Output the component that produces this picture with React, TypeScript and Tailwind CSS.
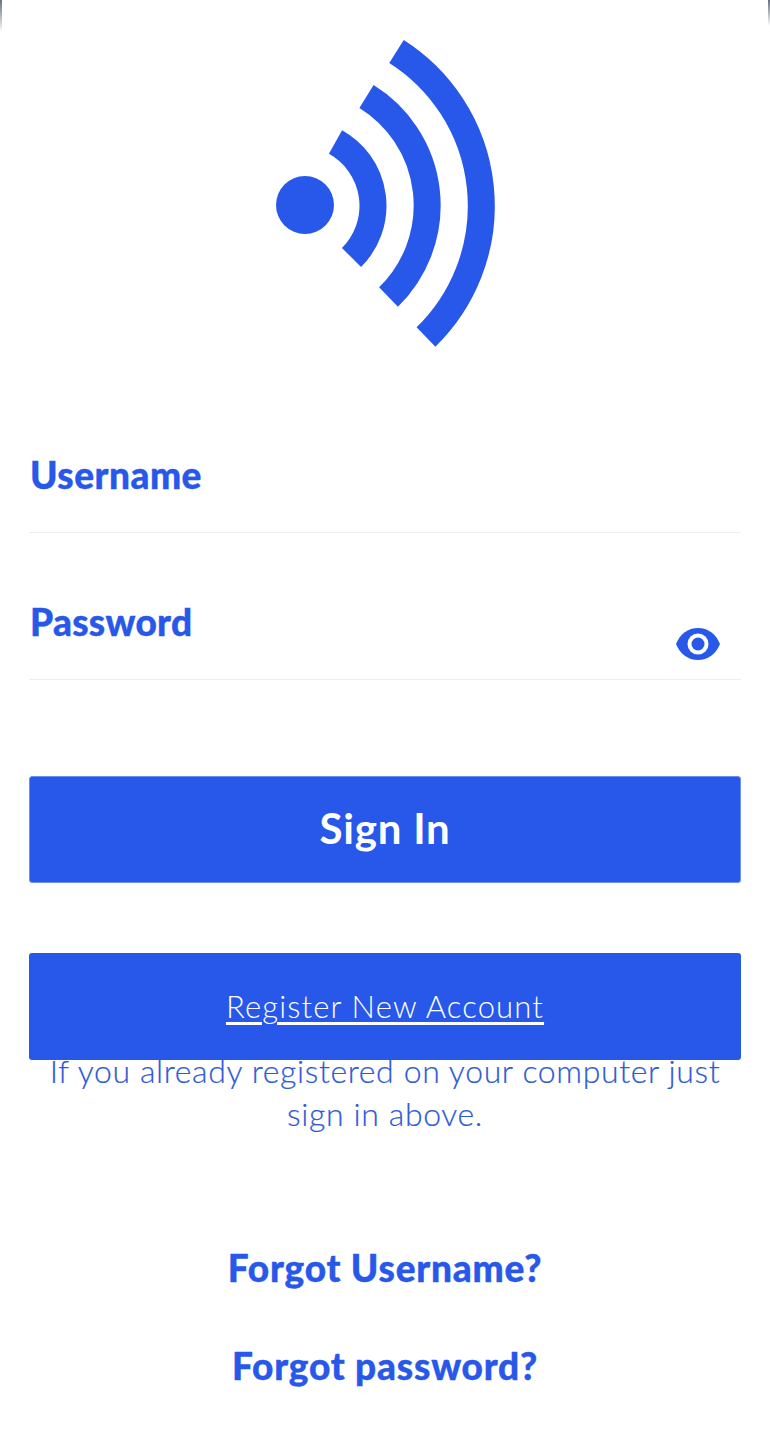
const boldBase = "text-[37px] leading-[46px] font-black [-webkit-text-stroke:0.4px]";

export default function App() {
  return (
    <div className="relative w-[770px] h-[1440px] bg-white overflow-hidden font-['Lato',sans-serif] text-[#2758ea]">
      <div className="absolute left-0 top-0 w-[2px] h-[32px] bg-gradient-to-b from-gray-500 to-white" />
      <div className="absolute right-0 top-0 w-[2px] h-[26px] bg-gradient-to-b from-gray-500 to-white" />
      <div className="flex justify-center pt-[40px] pl-[2px]">
        <svg width="222" height="310" viewBox="275 40 222 310" fill="none" className="block">
          <circle cx="305" cy="205" r="29" fill="#2758ea" />
          <g stroke="#2758ea" strokeWidth="27">
            <path d="M335.5 142 A73 73 0 0 1 351.5 257.5" />
            <path d="M366.5 96.5 A128 128 0 0 1 388.5 297" />
            <path d="M396.5 51.5 A183 183 0 0 1 426 337" />
          </g>
        </svg>
      </div>
      <div className="px-[29px]">
        <div className="mt-[96px] h-[87px] border-b border-[#eeeeee] pt-[6px] pl-[1px]">
          <div className={`${boldBase} tracking-[0.5px]`}>Username</div>
        </div>
        <div className="mt-[60px] h-[87px] border-b border-[#eeeeee] flex justify-between pl-[1px]">
          <div className={`${boldBase} tracking-[0.3px] mt-[6px]`}>Password</div>
          <svg width="44" height="32" viewBox="0 0 44 32" className="mr-[21px] mt-[35px]">
            <path d="M0 16 C4 6 12 0 22 0 C32 0 40 6 44 16 C40 26 32 32 22 32 C12 32 4 26 0 16 Z" fill="#2758ea" />
            <circle cx="22" cy="16" r="10.5" fill="white" />
            <circle cx="22" cy="16" r="6.5" fill="#2758ea" />
          </svg>
        </div>
        <div className="mt-[96px] h-[107px] rounded-[3px] bg-[#2758ea] border border-[#6f8ff0] flex items-center justify-center text-white text-[42px] font-bold tracking-[0.8px] pb-[3px]">Sign In</div>
        <div className="relative z-10 mt-[70px] h-[107px] rounded-[3px] bg-[#2758ea] flex items-center justify-center text-white text-[31px] font-light underline underline-offset-4 tracking-[1.15px]">Register New Account</div>
        <p className="mt-[-11px] text-center text-[#2f5ad6] text-[32px] leading-[43px] font-light tracking-[0.62px] px-[10px] [-webkit-text-stroke:0.2px]">If you already registered on your computer just sign in above.</p>
        <div className={`mt-[110px] text-center ${boldBase} tracking-[0.8px]`}>Forgot Username?</div>
        <div className={`mt-[52px] text-center ${boldBase} tracking-[0.8px]`}>Forgot password?</div>
      </div>
    </div>
  );
}
